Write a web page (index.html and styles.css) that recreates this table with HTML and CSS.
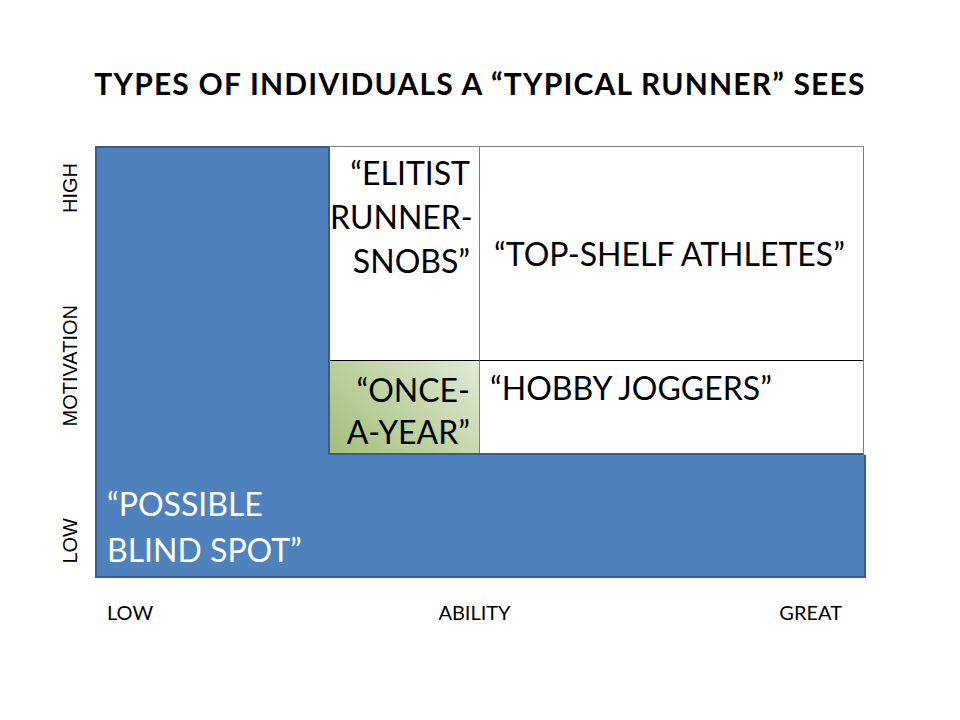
FILE: index.html
```html
<!DOCTYPE html>
<html lang="en">
<head>
<meta charset="utf-8">
<title>Types of individuals a typical runner sees</title>
<link rel="stylesheet" href="styles.css">
</head>
<body>
<div class="slide">
  <h1 class="title">TYPES OF INDIVIDUALS A “TYPICAL RUNNER” SEES</h1>
  <div class="plot">
    <div class="yaxis">
      <span class="ylabel">HIGH</span>
      <span class="ylabel">MOTIVATION</span>
      <span class="ylabel">LOW</span>
    </div>
    <div class="chart">
      <div class="blind"><p class="blind-text">“POSSIBLE<br>BLIND SPOT”</p></div>
      <div class="table">
        <div class="cell c-elitist">“ELITIST<br>RUNNER-<br>SNOBS”</div>
        <div class="cell c-top">“TOP-SHELF ATHLETES”</div>
        <div class="cell c-once">“ONCE-<br>A-YEAR”</div>
        <div class="cell c-hobby">“HOBBY JOGGERS”</div>
      </div>
      <div class="bar"></div>
    </div>
  </div>
  <div class="xaxis">
    <span class="xl">LOW</span>
    <span class="xc">ABILITY</span>
    <span class="xr">GREAT</span>
  </div>
</div>
</body>
</html>
```
FILE: styles.css
```css
html, body {
  margin: 0;
  padding: 0;
  background: #ffffff;
}
body {
  font-family: Lato, "Open Sans", sans-serif;
  color: #000000;
}
.slide {
  width: 960px;
  height: 720px;
  box-sizing: border-box;
  padding-top: 63px;
}
.title {
  margin: 0 0 43px;
  text-align: center;
  font-weight: 700;
  font-size: 30px;
  letter-spacing: 1.2px;
  line-height: 40px;
  white-space: nowrap;
}
.plot {
  display: flex;
  height: 432px;
}
.yaxis {
  width: 95px;
  box-sizing: border-box;
  display: flex;
  flex-direction: column;
  align-items: flex-end;
  justify-content: space-between;
  padding: 17px 13px 14px 0;
}
.ylabel {
  writing-mode: vertical-rl;
  transform: rotate(180deg);
  font-family: "Liberation Sans", Arial, sans-serif;
  font-size: 20px;
  line-height: 24px;
}
.chart {
  display: grid;
  grid-template-columns: 233px 538px;
  grid-template-rows: 309px 123px;
}
.blind {
  grid-column: 1;
  grid-row: 1 / 3;
  background: #4f81bd;
  border: 2px solid #385d8a;
  border-right: none;
  display: flex;
  flex-direction: column;
  justify-content: flex-end;
  padding: 0 0 3px 10px;
  color: #ffffff;
}
.blind-text {
  margin: 0;
  font-size: 32px;
  line-height: 46px;
  white-space: nowrap;
}
.table {
  grid-column: 2;
  grid-row: 1;
  margin-right: 2px;
  display: grid;
  grid-template-columns: 150px 1fr;
  grid-template-rows: 214px 1fr;
  background: #ffffff;
  border-left: 2px solid #385d8a;
  border-top: 1px solid #7f7f7f;
  border-right: 1px solid #7f7f7f;
  border-bottom: 2px solid #385d8a;
}
.cell {
  box-sizing: border-box;
  font-size: 32px;
  line-height: 44px;
  white-space: nowrap;
}
.c-elitist {
  border-right: 1px solid #7f7f7f;
  border-bottom: 1px solid #000000;
  text-align: right;
  padding: 4px 9px 0 0;
}
.c-top {
  border-bottom: 1px solid #000000;
  display: flex;
  align-items: center;
  justify-content: center;
  padding-right: 4px;
}
.c-once {
  border-right: 1px solid #7f7f7f;
  background: linear-gradient(45deg, #a4be7a 0%, #c4d6a9 55%, #e2ebd8 100%);
  text-align: right;
  line-height: 42px;
  padding: 8px 9px 0 0;
}
.c-hobby {
  padding: 5px 0 0 10px;
}
.bar {
  grid-column: 2;
  grid-row: 2;
  background: #4f81bd;
  border-right: 2px solid #385d8a;
  border-bottom: 2px solid #385d8a;
}
.xaxis {
  display: grid;
  grid-template-columns: 1fr auto 1fr;
  width: 771px;
  box-sizing: border-box;
  margin: 22px 0 0 95px;
  padding: 0 24px 0 12px;
  font-size: 20px;
  line-height: 24px;
}
.xl { justify-self: start; }
.xc { justify-self: center; }
.xr { justify-self: end; }
```
